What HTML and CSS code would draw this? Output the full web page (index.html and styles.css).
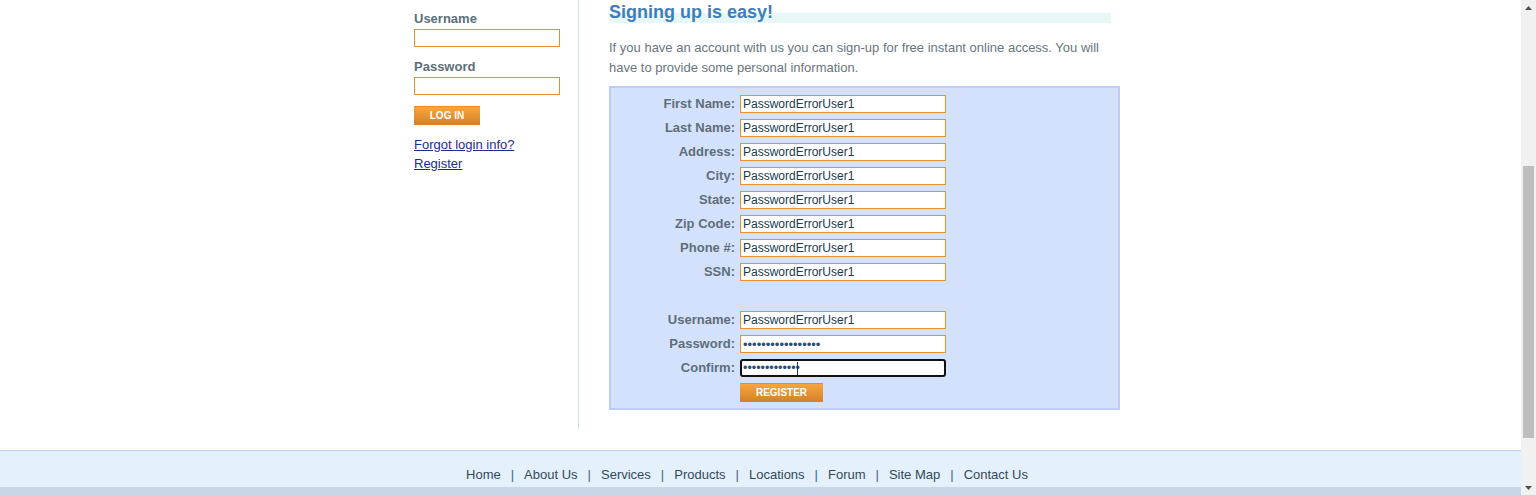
FILE: index.html
```html
<!DOCTYPE html>
<html>
<head>
<meta charset="utf-8">
<title>ParaBank | Register</title>
<link rel="stylesheet" href="styles.css">
</head>
<body>
<div class="window">
  <div class="page">
    <div class="main">
      <div class="left">
        <form class="login">
          <label class="login-label">Username</label>
          <input class="login-input" type="text">
          <label class="login-label second">Password</label>
          <input class="login-input" type="password">
          <button type="button" class="btn login-btn">LOG IN</button>
        </form>
        <div class="left-links">
          <a href="#">Forgot login info?</a>
          <a href="#">Register</a>
        </div>
      </div>
      <div class="right">
        <h1 class="title">Signing up is easy!</h1>
        <p class="intro">If you have an account with us you can sign-up for free instant online access. You will have to provide some personal information.</p>
        <form class="reg-form">
          <label>First Name:</label><input type="text" value="PasswordErrorUser1">
          <label>Last Name:</label><input type="text" value="PasswordErrorUser1">
          <label>Address:</label><input type="text" value="PasswordErrorUser1">
          <label>City:</label><input type="text" value="PasswordErrorUser1">
          <label>State:</label><input type="text" value="PasswordErrorUser1">
          <label>Zip Code:</label><input type="text" value="PasswordErrorUser1">
          <label>Phone #:</label><input type="text" value="PasswordErrorUser1">
          <label>SSN:</label><input type="text" value="PasswordErrorUser1">
          <div class="blank"></div><div class="blank"></div>
          <label>Username:</label><input type="text" value="PasswordErrorUser1">
          <label>Password:</label><input type="password" value="xxxxxxxxxxxxxxxxx">
          <label>Confirm:</label><span class="caret-wrap"><input class="focused" type="password" value="xxxxxxxxxxxxx"><span class="caret"></span></span>
          <div></div><button type="button" class="btn reg-btn">REGISTER</button>
        </form>
      </div>
    </div>
    <div class="footer">
      <a href="#">Home</a><span class="sep">|</span>
      <a href="#">About Us</a><span class="sep">|</span>
      <a href="#">Services</a><span class="sep">|</span>
      <a href="#">Products</a><span class="sep">|</span>
      <a href="#">Locations</a><span class="sep">|</span>
      <a href="#">Forum</a><span class="sep">|</span>
      <a href="#">Site Map</a><span class="sep">|</span>
      <a href="#">Contact Us</a>
    </div>
    <div class="footer-bottom"></div>
  </div>
  <div class="scrollbar">
    <div class="arrow"><svg width="7" height="4" viewBox="0 0 7 4"><polygon points="0,4 7,4 3.5,0" fill="#505050"/></svg></div>
    <div class="thumb"></div>
    <div class="track-rest"></div>
    <div class="arrow"><svg width="7" height="4" viewBox="0 0 7 4"><polygon points="0,0 7,0 3.5,4" fill="#505050"/></svg></div>
  </div>
</div>
</body>
</html>
```
FILE: styles.css
```css
* { box-sizing: border-box; }
html, body { margin: 0; padding: 0; overflow: hidden; }
body {
  font-family: "Liberation Sans", Arial, sans-serif;
  font-size: 13px;
  background: #fff;
}
.window {
  display: flex;
  width: 1536px;
  height: 495px;
}
.page {
  flex: 1;
  display: flex;
  flex-direction: column;
}
.main {
  display: flex;
  height: 429px;
  margin-left: 414px;
}
.left {
  width: 165px;
  border-right: 1px solid #c3e8e0;
  padding-top: 11px;
}
.login {
  display: flex;
  flex-direction: column;
  align-items: flex-start;
}
.login-label {
  font-weight: bold;
  color: #5d6e79;
  line-height: 16px;
  margin-bottom: 2px;
}
.login-label.second { margin-top: 12px; }
.login-input {
  width: 146px;
  height: 18px;
  border: 1px solid #e8922c;
  padding: 0 2px;
  margin: 0;
  font: 13px "Liberation Sans", Arial, sans-serif;
  background: #fff;
}
.btn {
  margin: 0;
  padding: 0;
  border: none;
  border-top: 1px solid #e48f2a;
  background: linear-gradient(#f7a53c, #d3812a);
  color: #fff;
  font: bold 10px "Liberation Sans", Arial, sans-serif;
  text-align: center;
  cursor: pointer;
}
.login-btn {
  width: 66px;
  height: 19px;
  margin-top: 11px;
  line-height: 16px;
}
.left-links {
  display: flex;
  flex-direction: column;
  align-items: flex-start;
  margin-top: 10px;
  line-height: 19px;
}
.left-links a {
  color: #1b2d8f;
  text-decoration: underline;
}
.right {
  padding-left: 30px;
  width: 541px;
}
.title {
  margin: 0;
  width: 502px;
  height: 23px;
  padding-top: 1px;
  font-size: 18px;
  line-height: 22px;
  font-weight: bold;
  color: #3d7dbb;
  background: linear-gradient(#e7f6f6, #e7f6f6) no-repeat left bottom / 100% 10px;
}
.intro {
  margin: 15px 0 0;
  line-height: 20px;
  color: #6a757e;
}
.reg-form {
  margin-top: 8px;
  width: 511px;
  border: 2px solid #bccdf8;
  background: #d4e1fd;
  padding: 7px 0 6px;
  display: grid;
  grid-template-columns: 124px 206px;
  column-gap: 5px;
  row-gap: 6px;
  align-items: center;
}
.reg-form label {
  text-align: right;
  font-weight: bold;
  color: #5d6e79;
  line-height: 18px;
}
.reg-form input {
  width: 206px;
  height: 18px;
  margin: 0;
  border: 1px solid #e8922c;
  padding: 0 2px;
  font: 12px "Liberation Sans", Arial, sans-serif;
  color: #22394e;
  background: #fff;
}
.reg-form input[type="password"] { color: #2a4d78; font-size: 13px; }
.reg-form input.focused {
  border: 2px solid #111;
  border-radius: 3px;
  padding: 0 1px;
  font-size: 12.5px;
}
.caret-wrap {
  position: relative;
  display: block;
  width: 206px;
  height: 18px;
}
.caret {
  position: absolute;
  left: 57px;
  top: 3px;
  width: 1px;
  height: 13px;
  background: #1d3550;
}
.blank { height: 18px; }
.reg-btn {
  width: 83px;
  height: 19px;
  line-height: 16px;
}
.footer {
  margin-top: 21px;
  height: 37px;
  border-top: 1px solid #bed3ea;
  background: #e4f1fc;
  display: flex;
  justify-content: center;
  align-items: flex-start;
  padding: 16px 27px 0 0;
  line-height: 16px;
}
.footer a {
  color: #33495b;
  text-decoration: none;
}
.footer .sep {
  color: #46627c;
  margin: 0 10px;
}
.footer-bottom {
  height: 8px;
  background: #c8d6e7;
}
.scrollbar {
  width: 15px;
  height: 495px;
  background: #f1f1f1;
  display: flex;
  flex-direction: column;
}
.arrow {
  height: 15px;
  display: flex;
  align-items: center;
  justify-content: center;
}
.thumb {
  margin: 151px 0 0 2px;
  width: 11px;
  height: 272px;
  background: #bebebe;
}
.track-rest { flex: 1; }
```
